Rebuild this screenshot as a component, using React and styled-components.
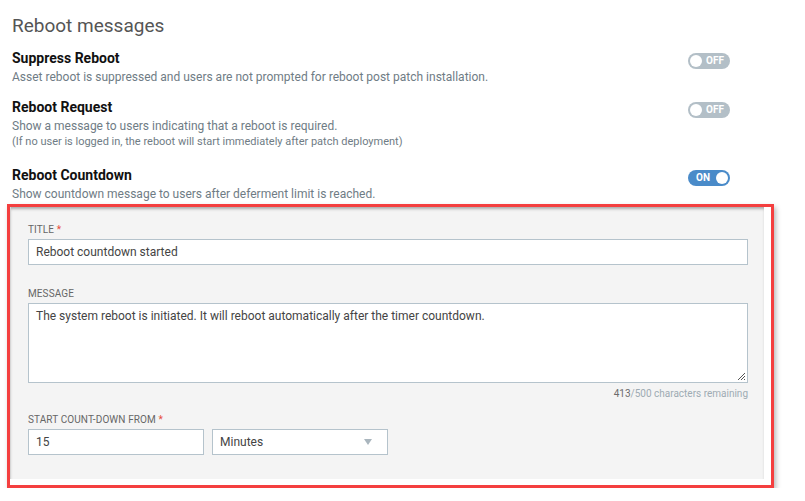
import React from 'react';
import styled, { createGlobalStyle } from 'styled-components';

const GlobalStyle = createGlobalStyle`
  body {
    margin: 0;
    background: #fff;
    font-family: Roboto, "Liberation Sans", Arial, sans-serif;
  }
`;

const settings = [
  {
    title: 'Suppress Reboot',
    lines: ['Asset reboot is suppressed and users are not prompted for reboot post patch installation.'],
    note: null,
    on: false,
  },
  {
    title: 'Reboot Request',
    lines: ['Show a message to users indicating that a reboot is required.'],
    note: '(If no user is logged in, the reboot will start immediately after patch deployment)',
    on: false,
  },
  {
    title: 'Reboot Countdown',
    lines: ['Show countdown message to users after deferment limit is reached.'],
    note: null,
    on: true,
  },
];

const Page = styled.div`
  width: 805px;
  padding-top: 14px;
`;

const Heading = styled.h1`
  margin: 0 0 11px 12px;
  font-size: 19px;
  line-height: 24px;
  font-weight: 400;
  color: #555;
`;

const Settings = styled.div`
  width: 718px;
  margin-left: 12px;
  display: flex;
  flex-direction: column;
  gap: 13px;
`;

const Row = styled.div`
  display: flex;
  justify-content: space-between;
  align-items: flex-start;
  padding-bottom: ${(p) => (p.$extra ? '4px' : '0')};
`;

const RowText = styled.div`
  display: flex;
  flex-direction: column;
  gap: 3px;
`;

const RowTitle = styled.div`
  font-size: 14px;
  line-height: 18px;
  font-weight: 700;
  color: #111;
`;

const RowDesc = styled.div`
  font-size: ${(p) => (p.$small ? '11px' : '12px')};
  line-height: 15px;
  color: #6f7c85;
`;

const Toggle = styled.div`
  margin-top: 4px;
  width: 42px;
  height: 16px;
  border-radius: 8px;
  background: ${(p) => (p.$on ? '#4a8bc9' : '#b3bfc7')};
  display: flex;
  flex-direction: ${(p) => (p.$on ? 'row-reverse' : 'row')};
  align-items: center;
  justify-content: space-between;
  padding: 0 2px;
  box-sizing: border-box;
`;

const Knob = styled.span`
  width: 12px;
  height: 12px;
  border-radius: 50%;
  background: #fff;
`;

const ToggleText = styled.span`
  flex: 1;
  text-align: center;
  font-size: 10px;
  font-weight: 700;
  color: #fff;
  line-height: 16px;
`;

const Frame = styled.div`
  margin: 2px 0 0 7px;
  width: 767px;
  box-sizing: border-box;
  border: 3px solid #f43f3f;
  background: #fff;
  box-shadow: 2px 3px 5px rgba(0, 0, 0, 0.28);
`;

const Panel = styled.div`
  margin: 0 7px 6px 0;
  background: #f4f4f4;
  border-left: 1px solid #d6d6d6;
  box-shadow: inset 0 3px 3px -1px rgba(0, 0, 0, 0.3);
  padding: 17px 16px 24px 17px;
`;

const Field = styled.div`
  display: flex;
  flex-direction: column;
  margin-bottom: ${(p) => p.$gap || 0}px;
`;

const Label = styled.label`
  font-size: 10px;
  line-height: 12px;
  letter-spacing: 0.1px;
  color: #666;
  text-transform: uppercase;
  margin-bottom: 3px;
`;

const Req = styled.span`
  color: #e74c3c;
`;

const Input = styled.div`
  box-sizing: border-box;
  height: 26px;
  width: ${(p) => p.$w || '100%'};
  border: 1px solid #b5c3cc;
  background: #fff;
  padding: 0 7px;
  font-size: 12px;
  line-height: 24px;
  color: #444;
  display: flex;
  align-items: center;
  justify-content: space-between;
`;

const TextArea = styled.div`
  position: relative;
  box-sizing: border-box;
  height: 80px;
  border: 1px solid #b5c3cc;
  background: #fff;
  padding: 3px 7px;
  font-size: 12px;
  line-height: 18px;
  color: #444;
`;

const Grip = styled.svg`
  position: absolute;
  right: 1px;
  bottom: 1px;
`;

const Counter = styled.div`
  margin-top: 4px;
  text-align: right;
  font-size: 10px;
  line-height: 14px;
  color: #9eabb3;

  b {
    font-weight: 400;
    color: #6b6b6b;
  }
`;

const InlineRow = styled.div`
  display: flex;
  gap: 8px;
`;

const Caret = styled.span`
  width: 0;
  height: 0;
  border-left: 4px solid transparent;
  border-right: 4px solid transparent;
  border-top: 6px solid #aab6be;
  margin-right: 8px;
`;

export default function App() {
  return (
    <Page>
      <GlobalStyle />
      <Heading>Reboot messages</Heading>
      <Settings>
        {settings.map((s) => (
          <Row key={s.title} $extra={!!s.note}>
            <RowText>
              <RowTitle>{s.title}</RowTitle>
              <div>
                {s.lines.map((l) => (
                  <RowDesc key={l}>{l}</RowDesc>
                ))}
                {s.note && <RowDesc $small>{s.note}</RowDesc>}
              </div>
            </RowText>
            <Toggle $on={s.on}>
              <Knob />
              <ToggleText>{s.on ? 'ON' : 'OFF'}</ToggleText>
            </Toggle>
          </Row>
        ))}
      </Settings>
      <Frame>
        <Panel>
          <Field $gap={23}>
            <Label>
              Title <Req>*</Req>
            </Label>
            <Input>Reboot countdown started</Input>
          </Field>
          <Field $gap={13}>
            <Label>Message</Label>
            <TextArea>
              The system reboot is initiated. It will reboot automatically after the timer countdown.
              <Grip width="10" height="10" viewBox="0 0 10 10">
                <path d="M9 2 L2 9 M9 5 L5 9 M9 8 L8 9" stroke="#555" strokeWidth="1" />
              </Grip>
            </TextArea>
            <Counter>
              <b>413</b>/500 characters remaining
            </Counter>
          </Field>
          <Field>
            <Label>
              Start count-down from <Req>*</Req>
            </Label>
            <InlineRow>
              <Input $w="176px">15</Input>
              <Input $w="176px">
                Minutes
                <Caret />
              </Input>
            </InlineRow>
          </Field>
        </Panel>
      </Frame>
    </Page>
  );
}
